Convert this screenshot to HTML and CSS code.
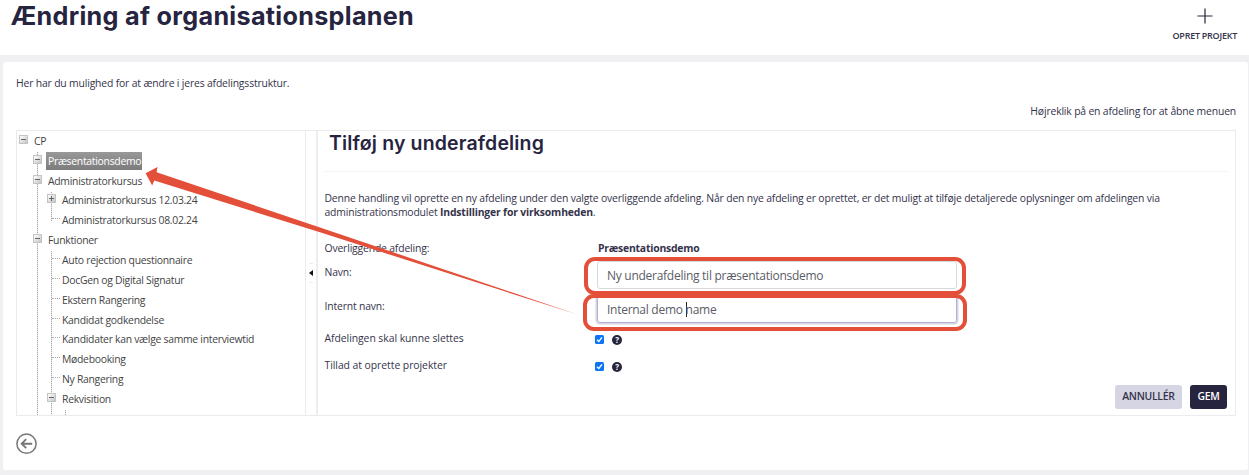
FILE: index.html
```html
<!DOCTYPE html>
<html lang="da">
<head>
<meta charset="UTF-8">
<meta name="viewport" content="width=device-width, initial-scale=1.0">
<title>Ændring af organisationsplanen</title>
<link rel="stylesheet" href="styles.css">
</head>
<body>

<header class="top">
  <h1>Ændring af organisationsplanen</h1>
  <a class="opret">
    <svg width="16" height="16" viewBox="0 0 16 16"><path d="M8 0.5V15.5M0.5 8H15.5" stroke="#26243f" stroke-width="1.2" fill="none"/></svg>
    <span>OPRET PROJEKT</span>
  </a>
</header>

<main class="panel">
  <p class="intro">Her har du mulighed for at ændre i jeres afdelingsstruktur.</p>
  <p class="hint">Højreklik på en afdeling for at åbne menuen</p>

  <div class="split">
    <div class="tree">
      <div class="row"><i class="toggle"></i><span class="label">CP</span></div>
      <ul class="level">
        <li><div class="row"><i class="toggle"></i><span class="label selected">Præsentationsdemo</span></div></li>
        <li>
          <div class="row"><i class="toggle"></i><span class="label">Administratorkursus</span></div>
          <ul class="level closed">
            <li><div class="row"><i class="toggle plus"></i><span class="label">Administratorkursus 12.03.24</span></div></li>
            <li><div class="row"><i class="twig"></i><span class="label">Administratorkursus 08.02.24</span></div></li>
          </ul>
        </li>
        <li>
          <div class="row"><i class="toggle"></i><span class="label">Funktioner</span></div>
          <ul class="level">
            <li><div class="row"><i class="twig"></i><span class="label">Auto rejection questionnaire</span></div></li>
            <li><div class="row"><i class="twig"></i><span class="label">DocGen og Digital Signatur</span></div></li>
            <li><div class="row"><i class="twig"></i><span class="label">Ekstern Rangering</span></div></li>
            <li><div class="row"><i class="twig"></i><span class="label">Kandidat godkendelse</span></div></li>
            <li><div class="row"><i class="twig"></i><span class="label">Kandidater kan vælge samme interviewtid</span></div></li>
            <li><div class="row"><i class="twig"></i><span class="label">Mødebooking</span></div></li>
            <li><div class="row"><i class="twig"></i><span class="label">Ny Rangering</span></div></li>
            <li>
              <div class="row"><i class="toggle"></i><span class="label">Rekvisition</span></div>
              <ul class="level">
                <li><div class="row"><i class="twig"></i></div></li>
              </ul>
            </li>
          </ul>
        </li>
      </ul>
    </div>

    <div class="splitter"><span class="grip"><svg width="4" height="6" viewBox="0 0 4 6"><path d="M4 0V6L0 3Z" fill="#111"/></svg></span></div>

    <section class="content">
      <h2>Tilføj ny underafdeling</h2>
      <p class="text">Denne handling vil oprette en ny afdeling under den valgte overliggende afdeling. Når den nye afdeling er oprettet, er det muligt at tilføje detaljerede oplysninger om afdelingen via<br>administrationsmodulet <b>Indstillinger for virksomheden</b>.</p>

      <div class="form">
        <span class="name">Overliggende afdeling:</span>
        <b class="value">Præsentationsdemo</b>
        <span class="name field">Navn:</span>
        <div class="input">Ny underafdeling til præsentationsdemo</div>
        <span class="name field">Internt navn:</span>
        <div class="input focus">Internal demo <i class="caret"></i>name</div>
        <span class="name option">Afdelingen skal kunne slettes</span>
        <div class="check">
          <svg width="9" height="9" viewBox="0 0 9 9"><rect width="9" height="9" rx="1.5" fill="#0b75f5"/><path d="M2 4.7L3.8 6.5L7 2.3" stroke="#fff" stroke-width="1.3" fill="none"/></svg>
          <span class="help">?</span>
        </div>
        <span class="name option">Tillad at oprette projekter</span>
        <div class="check">
          <svg width="9" height="9" viewBox="0 0 9 9"><rect width="9" height="9" rx="1.5" fill="#0b75f5"/><path d="M2 4.7L3.8 6.5L7 2.3" stroke="#fff" stroke-width="1.3" fill="none"/></svg>
          <span class="help">?</span>
        </div>
      </div>

      <div class="buttons">
        <a class="button cancel">ANNULLÉR</a>
        <a class="button save">GEM</a>
      </div>
    </section>
  </div>

  <a class="back">
    <svg width="22" height="22" viewBox="0 0 22 22"><circle cx="10.5" cy="10.7" r="9.6" fill="none" stroke="#777" stroke-width="1.5"/><path d="M16.2 10.7H5.8M10.2 6.2L5.7 10.7L10.2 15.2" fill="none" stroke="#777" stroke-width="1.9"/></svg>
  </a>
</main>

<!-- arrow and frames over the page -->
<svg class="marks" width="1249" height="475" viewBox="0 0 1249 475">
  <path d="M145.6 173.2L157.5 167L156.6 172.2L320 227.5L577.5 314.6L320 232.3L154.3 180.6L152.2 185.4Z" fill="#e44f39"/>
  <rect x="586" y="259" width="378" height="34" rx="9" fill="none" stroke="#e44f39" stroke-width="4"/>
  <rect x="585" y="296" width="380" height="33" rx="9" fill="none" stroke="#e44f39" stroke-width="4"/>
</svg>

</body>
</html>
```

FILE: styles.css
```css
* {
  box-sizing: border-box;
}

body {
  margin: 0;
  background: #f0f0f2;
  font-family: "Open Sans", sans-serif;
  font-size: 10.4px;
  letter-spacing: -0.17px;
  color: #35334b;
  height: 475px;
  overflow: hidden;
}

h1, h2, p, ul {
  margin: 0;
  padding: 0;
}

.top {
  height: 55px;
  background: #fff;
  display: flex;
  justify-content: space-between;
  padding: 0 12px 0 10.5px;
}

h1 {
  font-family: Inter, sans-serif;
  font-size: 25.2px;
  line-height: 33px;
  font-weight: 700;
  letter-spacing: 0.3px;
  color: #26243f;
}

.opret {
  display: flex;
  flex-direction: column;
  align-items: center;
  padding-top: 8px;
  font-size: 9px;
  font-weight: 600;
  letter-spacing: -0.25px;
  line-height: 12px;
  gap: 6px;
}

.panel {
  margin: 7px 1px 0 3px;
  height: 408px;
  background: #fff;
  border-radius: 3px;
  padding: 13px 12px 0 13px;
}

.intro {
  line-height: 16px;
}

.hint {
  line-height: 16px;
  margin-top: 12px;
  text-align: right;
}

.split {
  margin-top: 11px;
  height: 286px;
  display: flex;
  border: 1px solid #ebebed;
}

/* department tree */
.tree {
  width: 288px;
  overflow: hidden;
  padding-left: 2px;
  color: #444;
  letter-spacing: -0.28px;
}

.row {
  height: 19.85px;
  display: flex;
  align-items: center;
}

.level {
  list-style: none;
  margin-left: 14px;
  background: repeating-linear-gradient(#aaa 0 1px, #e4e4e4 1px 2px) 4px 1px / 1px 100% no-repeat;
}

.level.closed {
  background-size: 1px 29px;
}

.toggle {
  width: 9px;
  height: 9px;
  margin: 0 4px 3px 0;
  border: 1px solid #c4c4c4;
  background: linear-gradient(#666, #666) center / 5px 1px no-repeat, linear-gradient(135deg, #fff, #c4c4c4);
}

.toggle.plus {
  background: linear-gradient(#666, #666) center / 5px 1px no-repeat, linear-gradient(#666, #666) center / 1px 5px no-repeat, linear-gradient(135deg, #fff, #c4c4c4);
}

.twig {
  width: 8px;
  margin: 0 0 3px 5px;
  border-top: 1px dotted #aaa;
}

.label {
  padding: 0 2px;
  line-height: 18px;
  white-space: nowrap;
}

.selected {
  padding-right: 1px;
  background: linear-gradient(#999, #7c7c7c);
  color: #fff;
}

.splitter {
  width: 13px;
  border-left: 1px solid #ebebed;
  border-right: 2px solid #ededef;
  display: flex;
  align-items: center;
  justify-content: center;
}

.grip {
  height: 20px;
  display: flex;
  align-items: center;
  border-top: 1px solid #ebebed;
  border-bottom: 1px solid #ebebed;
}

.content {
  flex: 1;
  padding: 0 8px 0 6.5px;
  display: flex;
  flex-direction: column;
}

h2 {
  height: 41px;
  padding-left: 4.5px;
  font-family: Inter, sans-serif;
  font-size: 19.5px;
  line-height: 25px;
  font-weight: 600;
  letter-spacing: 0.15px;
  color: #26243f;
  border-bottom: 1px solid #f3f3f5;
}

.text {
  margin-top: 19px;
  line-height: 14.3px;
  white-space: nowrap;
}

.form {
  margin-top: 19px;
  display: grid;
  grid-template-columns: 272.5px 360px;
  grid-template-rows: 22px 34px 35px 27px 27px;
}

.name, .value {
  line-height: 16px;
}

.name {
  padding-top: 1px;
  white-space: nowrap;
}

.name.field {
  padding-top: 3px;
}

.name.option {
  padding-top: 0;
  letter-spacing: -0.05px;
}

.value {
  padding: 1px 0 0 1px;
  letter-spacing: -0.22px;
}

.input {
  height: 28px;
  border: 1px solid #d8d8df;
  border-radius: 3px;
  padding-left: 9px;
  font-size: 12px;
  letter-spacing: -0.27px;
  line-height: 28px;
  color: #5a5d66;
}

.focus {
  border-color: #b5b3cf;
  box-shadow: 0 0 0 1.5px #d5d4e6;
}

.caret {
  display: inline-block;
  width: 1px;
  height: 15px;
  margin-right: -1px;
  vertical-align: -3px;
  background: #222;
}

.check {
  display: flex;
  align-items: center;
  height: 20px;
  margin-left: -2px;
  gap: 8px;
}

.help {
  width: 10px;
  height: 10px;
  margin-top: 1px;
  border-radius: 5px;
  background: #26243f;
  color: #fff;
  font-size: 8px;
  font-weight: 700;
  line-height: 10px;
  text-align: center;
}

.buttons {
  margin: auto 0 6px;
  display: flex;
  justify-content: flex-end;
  gap: 8px;
}

.button {
  height: 24px;
  line-height: 23px;
  padding: 0 7.5px;
  border-radius: 3px;
  font-weight: 600;
  letter-spacing: -0.3px;
}

.cancel {
  background: #d6d5e3;
}

.save {
  background: #26243f;
  color: #fff;
}

.back {
  display: block;
  margin-top: 17px;
}

.marks {
  position: absolute;
  left: 0;
  top: 0;
}
```
